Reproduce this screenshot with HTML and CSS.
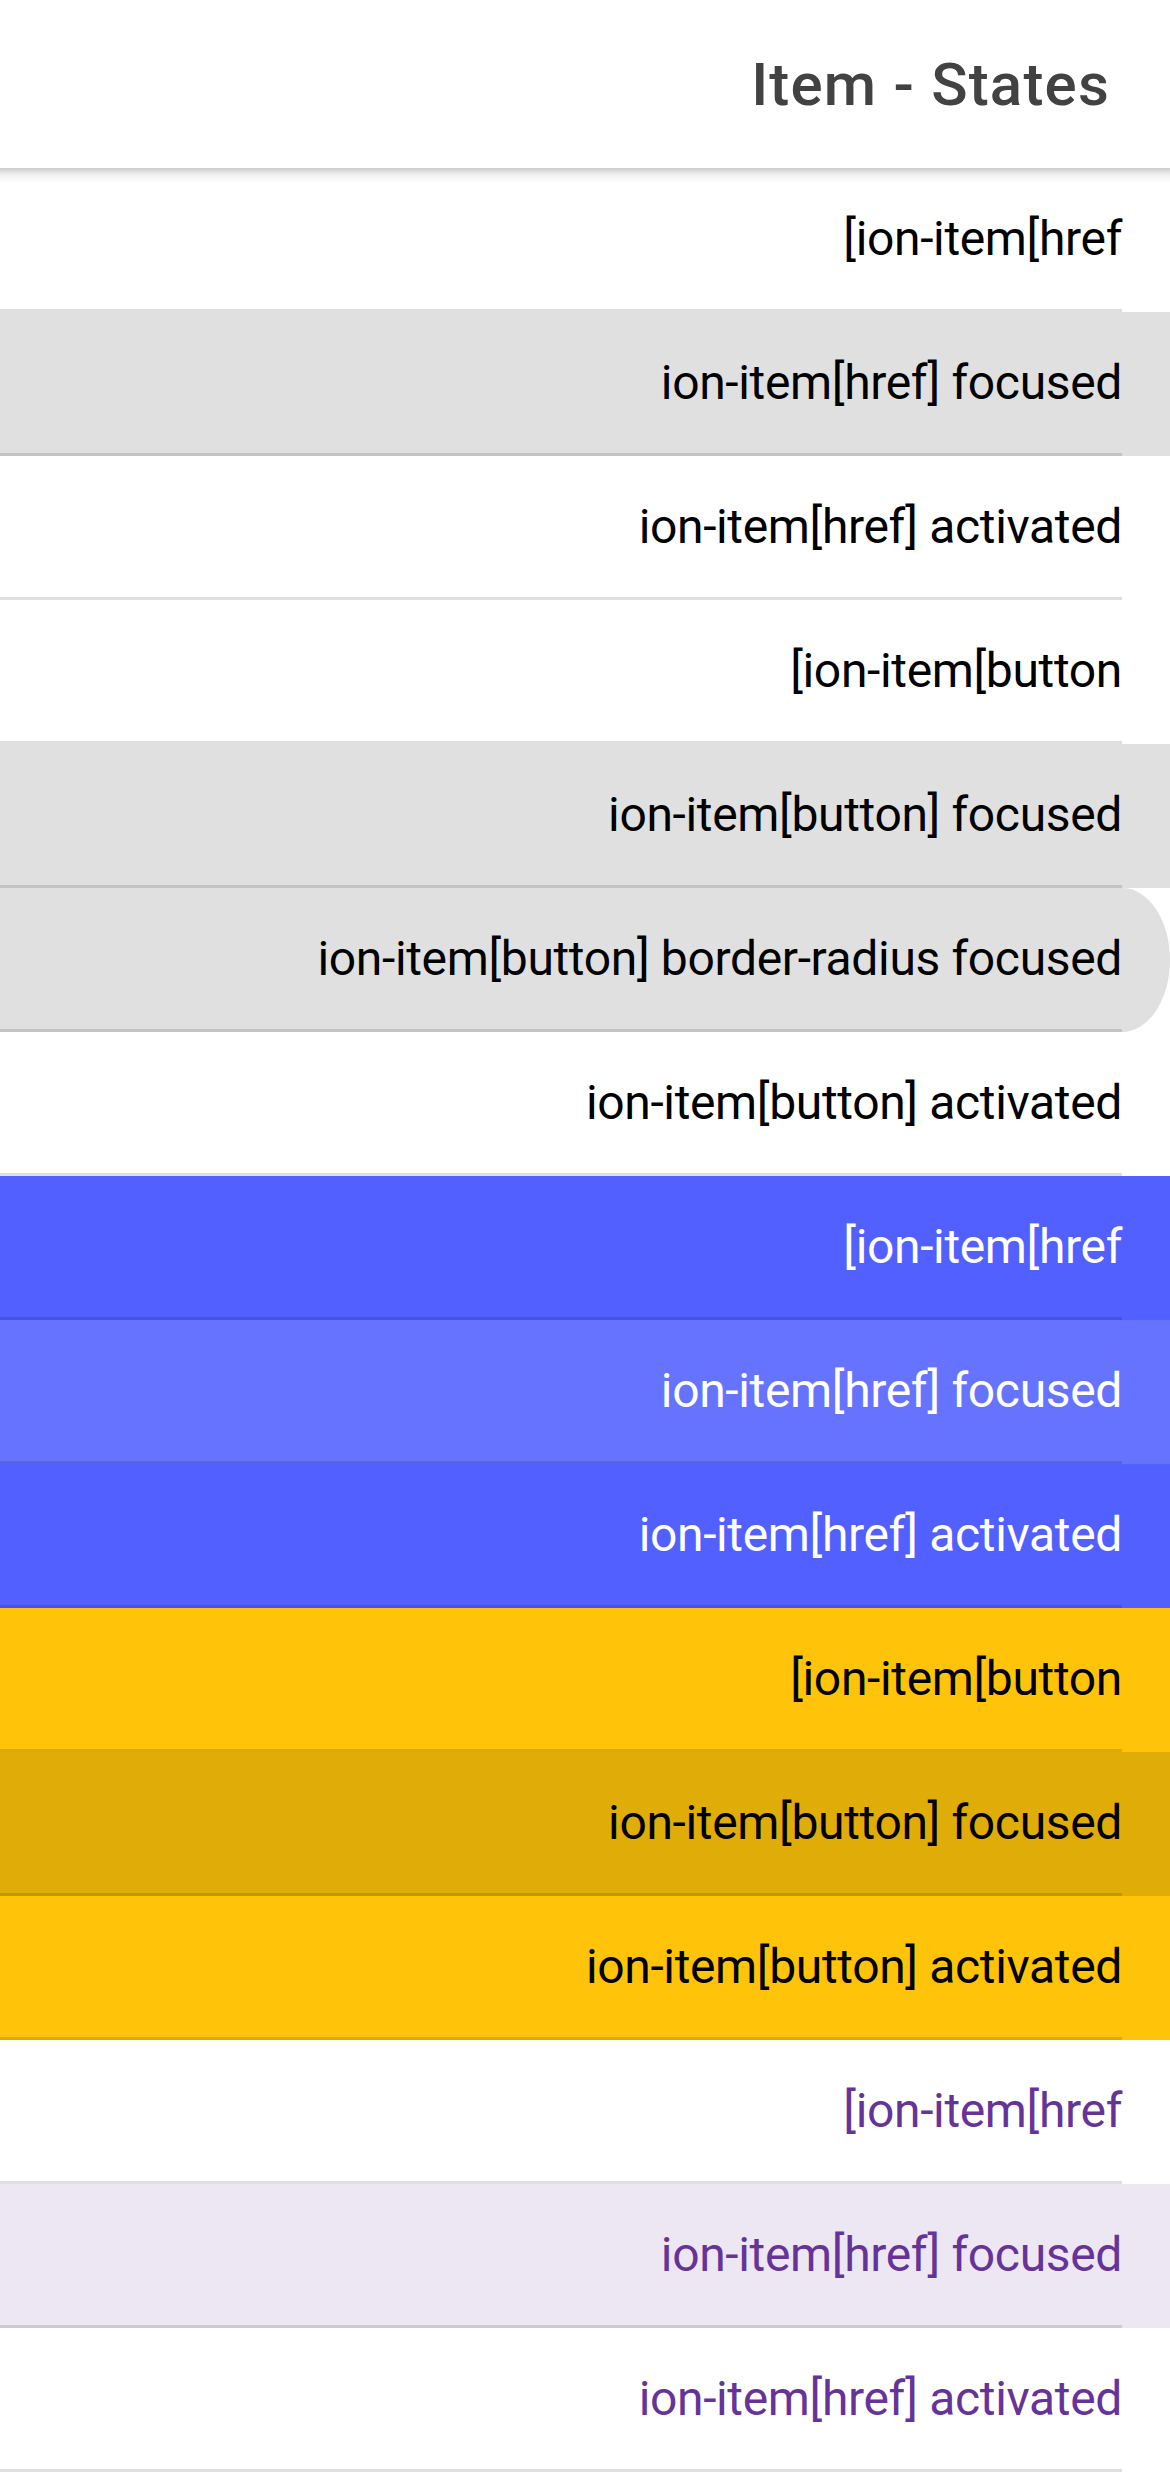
FILE: index.html
```html
<!DOCTYPE html>
<html lang="en" dir="rtl">
<head>
<meta charset="utf-8">
<title>Item - States</title>
<link rel="stylesheet" href="styles.css">
</head>
<body>
<header class="header">
  <div class="toolbar">
    <div class="title">Item - States</div>
  </div>
</header>
<main class="list">
  <div class="item"><div class="inner"><span class="label">[ion-item[href</span></div></div>
  <div class="item focused"><div class="inner"><span class="label">ion-item[href] focused</span></div></div>
  <div class="item"><div class="inner"><span class="label">ion-item[href] activated</span></div></div>
  <div class="item"><div class="inner"><span class="label">[ion-item[button</span></div></div>
  <div class="item focused"><div class="inner"><span class="label">ion-item[button] focused</span></div></div>
  <div class="item focused rounded"><div class="inner"><span class="label">ion-item[button] border-radius focused</span></div></div>
  <div class="item"><div class="inner"><span class="label">ion-item[button] activated</span></div></div>

  <div class="item tertiary"><div class="inner"><span class="label">[ion-item[href</span></div></div>
  <div class="item tertiary tertiary-focused"><div class="inner"><span class="label">ion-item[href] focused</span></div></div>
  <div class="item tertiary"><div class="inner"><span class="label">ion-item[href] activated</span></div></div>

  <div class="item warning"><div class="inner"><span class="label">[ion-item[button</span></div></div>
  <div class="item warning warning-focused"><div class="inner"><span class="label">ion-item[button] focused</span></div></div>
  <div class="item warning"><div class="inner"><span class="label">ion-item[button] activated</span></div></div>

  <div class="item purple"><div class="inner"><span class="label">[ion-item[href</span></div></div>
  <div class="item purple purple-focused"><div class="inner"><span class="label">ion-item[href] focused</span></div></div>
  <div class="item purple"><div class="inner"><span class="label">ion-item[href] activated</span></div></div>
</main>
</body>
</html>
```
FILE: styles.css
```css
html, body {
  margin: 0;
  padding: 0;
  background: #ffffff;
}

body {
  font-family: Roboto, "Liberation Sans", sans-serif;
  width: 1170px;
}

.header {
  position: relative;
  z-index: 2;
  background: #ffffff;
}

.header::after {
  content: "";
  position: absolute;
  left: 0;
  right: 0;
  bottom: -15px;
  height: 15px;
  background: linear-gradient(to bottom, rgba(0, 0, 0, 0.2), rgba(0, 0, 0, 0.06) 45%, rgba(0, 0, 0, 0));
  pointer-events: none;
}

.toolbar {
  height: 168px;
  display: flex;
  align-items: center;
  padding: 0 60px;
  box-sizing: border-box;
}

.title {
  font-size: 60px;
  font-weight: 500;
  letter-spacing: 0.02em;
  color: #424242;
}

.list {
  display: flex;
  flex-direction: column;
}

.item {
  height: 144px;
  padding-inline-start: 48px;
  background: #ffffff;
  color: #000000;
  display: flex;
}

.inner {
  flex: 1;
  display: flex;
  align-items: center;
  border-bottom: 3px solid rgba(0, 0, 0, 0.13);
  padding-inline-end: 48px;
}

.label {
  font-size: 48px;
  letter-spacing: -0.35px;
  white-space: nowrap;
  direction: ltr;
  unicode-bidi: isolate;
}

.focused {
  background: #e0e0e0;
}

.rounded {
  border-radius: 0 48px 48px 0 / 0 72px 72px 0;
}

.tertiary {
  background: #5260ff;
  color: #ffffff;
}

.tertiary-focused {
  background: #6673ff;
}

.warning {
  background: #ffc409;
  color: #000000;
}

.warning-focused {
  background: #e0ac08;
}

.purple {
  background: #ffffff;
  color: #663399;
}

.purple-focused {
  background: #ede7f3;
}
```
